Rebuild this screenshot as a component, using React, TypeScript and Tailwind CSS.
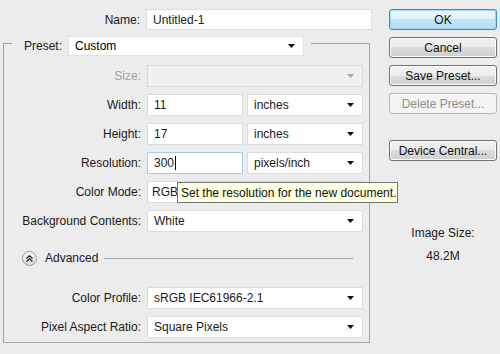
import React from "react";

const font = { fontFamily: '"Liberation Sans", Arial, sans-serif' };

function Arrow({ disabled }: { disabled?: boolean }) {
  return (
    <svg width="7" height="4" viewBox="0 0 7 4" className="shrink-0">
      <polygon points="0,0 7,0 3.5,4" fill={disabled ? "#a8a8a8" : "#111"} />
    </svg>
  );
}

function Select({ value, w, disabled, tight }: { value: string; w: string; disabled?: boolean; tight?: boolean }) {
  return (
    <div
      className={`${w} h-[22px] flex items-center justify-between ${tight ? "pl-[4px]" : "pl-[6px]"} pr-[8px] border ${
        disabled ? "bg-[#f0f0f0] border-[#d9d9d9]" : "bg-white border-[#dcdcdc]"
      }`}
    >
      <span className="text-[#1a1a1a]">{value}</span>
      <Arrow disabled={disabled} />
    </div>
  );
}

function Input({ value, w, focused }: { value: string; w: string; focused?: boolean }) {
  return (
    <div
      className={`${w} h-[22px] flex items-center pl-[6px] bg-white border ${
        focused ? "border-[#a9c9e6]" : "border-[#dcdcdc]"
      }`}
    >
      <span className="text-[#1a1a1a]">{value}</span>
      {focused && <span className="w-px h-[14px] bg-black ml-[1px]" />}
    </div>
  );
}

function Row({ label, children, disabled }: { label: string; children: React.ReactNode; disabled?: boolean }) {
  return (
    <div className="flex items-center h-[22px]">
      <div className={`w-[137px] text-right ${disabled ? "text-[#a3a3a3]" : "text-[#1a1a1a]"}`}>{label}</div>
      <div className="ml-[6px] flex items-center gap-[4px]">{children}</div>
    </div>
  );
}

function Btn({ label, primary, disabled }: { label: string; primary?: boolean; disabled?: boolean }) {
  const cls = disabled
    ? "border-[#b5b9bc] bg-[#f4f4f4] text-[#8d8d8d]"
    : primary
    ? "border-[#3c8ec4] bg-[linear-gradient(#f0f8fd,#dcf0fb_50%,#c2e5f8_50%,#b7def5)] text-[#111] shadow-[inset_0_0_0_1px_#9ed8f8]"
    : "border-[#707070] bg-[linear-gradient(#f2f2f2,#ebebeb_50%,#dddddd_50%,#cfcfcf)] text-[#111] shadow-[inset_0_0_0_1px_#fcfcfc]";
  return (
    <div className={`w-[108px] h-[21px] rounded-[3px] border flex items-center justify-center ${cls}`}>{label}</div>
  );
}

export default function App() {
  return (
    <div className="relative w-[500px] h-[354px] bg-[#ececec] text-[12px] leading-none flex overflow-hidden" style={font}>
      {/* left column */}
      <div className="w-[380px] pt-[9px] flex flex-col">
        <div className="flex items-center h-[21px]">
          <div className="w-[140px] text-right text-[#1a1a1a]">Name:</div>
          <div className="ml-[6px] w-[226px] h-[21px] bg-white border border-[#dcdcdc] flex items-center pl-[6px] text-[#1a1a1a]">
            Untitled-1
          </div>
        </div>

        {/* group */}
        <div className="ml-[3px] w-[367px] mt-[6px] flex flex-col">
          <div className="flex h-[20px]">
            <div className="w-[9px] mt-[7px] border-t border-l border-[#a3a3a3]" />
            <div className="pl-[12px] flex items-center text-[#1a1a1a]">Preset:</div>
            <div className="ml-[6px]">
              <div className="w-[236px] h-[20px] flex items-center justify-between pl-[6px] pr-[8px] bg-white border border-[#e2e2e2]">
                <span>Custom</span>
                <Arrow />
              </div>
            </div>
            <div className="flex-1 ml-[7px] mt-[7px] border-t border-r border-[#a3a3a3]" />
          </div>
          <div className="border-l border-r border-b border-[#a3a3a3] pt-[9px] pb-[4px] flex flex-col">
            <div className="flex flex-col gap-[7px]">
              <Row label="Size:" disabled>
                <Select value="" w="w-[216px]" disabled />
              </Row>
              <Row label="Width:">
                <Input value="11" w="w-[96px]" />
                <Select value="inches" w="w-[116px]" />
              </Row>
              <Row label="Height:">
                <Input value="17" w="w-[96px]" />
                <Select value="inches" w="w-[116px]" />
              </Row>
              <Row label="Resolution:">
                <Input value="300" w="w-[96px]" focused />
                <Select value="pixels/inch" w="w-[116px]" />
              </Row>
              <Row label="Color Mode:">
                <Select value="RGB" w="w-[216px]" tight />
              </Row>
              <Row label="Background Contents:">
                <Select value="White" w="w-[216px]" />
              </Row>
            </div>

            <div className="flex items-center h-[16px] mt-[18px] pl-[18px] pr-[16px]">
              <div className="w-[15px] h-[15px] rounded-full border border-[#9a9a9a] bg-[linear-gradient(#fafafa,#dcdcdc)] flex items-center justify-center">
                <svg width="7" height="7" viewBox="0 0 7 7">
                  <polyline points="0.5,3.5 3.5,0.8 6.5,3.5" fill="none" stroke="#222" strokeWidth="1.3" />
                  <polyline points="0.5,6.5 3.5,3.8 6.5,6.5" fill="none" stroke="#222" strokeWidth="1.3" />
                </svg>
              </div>
              <span className="ml-[8px] text-[#1a1a1a]">Advanced</span>
              <div className="flex-1 ml-[6px] border-t border-[#a3a3a3]" />
            </div>

            <div className="flex flex-col gap-[7px] mt-[21px]">
              <Row label="Color Profile:">
                <Select value="sRGB IEC61966-2.1" w="w-[216px]" />
              </Row>
              <Row label="Pixel Aspect Ratio:">
                <Select value="Square Pixels" w="w-[216px]" />
              </Row>
            </div>
          </div>
        </div>
      </div>

      {/* right column */}
      <div className="ml-[9px] pt-[9px] flex flex-col items-center">
        <div className="flex flex-col gap-[7px]">
          <Btn label="OK" primary />
          <Btn label="Cancel" />
          <Btn label="Save Preset..." />
          <Btn label="Delete Preset..." disabled />
        </div>
        <div className="mt-[26px]">
          <Btn label="Device Central..." />
        </div>
        <div className="mt-[66px] text-[#1a1a1a]">Image Size:</div>
        <div className="mt-[11px] text-[#1a1a1a]">48.2M</div>
      </div>

      {/* tooltip */}
      <div className="absolute left-[177px] top-[182px] w-[221px] h-[21px] bg-[#ffffe1] border border-[#767676] flex items-center pl-[3px] text-[#111]">
        Set the resolution for the new document.
      </div>
    </div>
  );
}
